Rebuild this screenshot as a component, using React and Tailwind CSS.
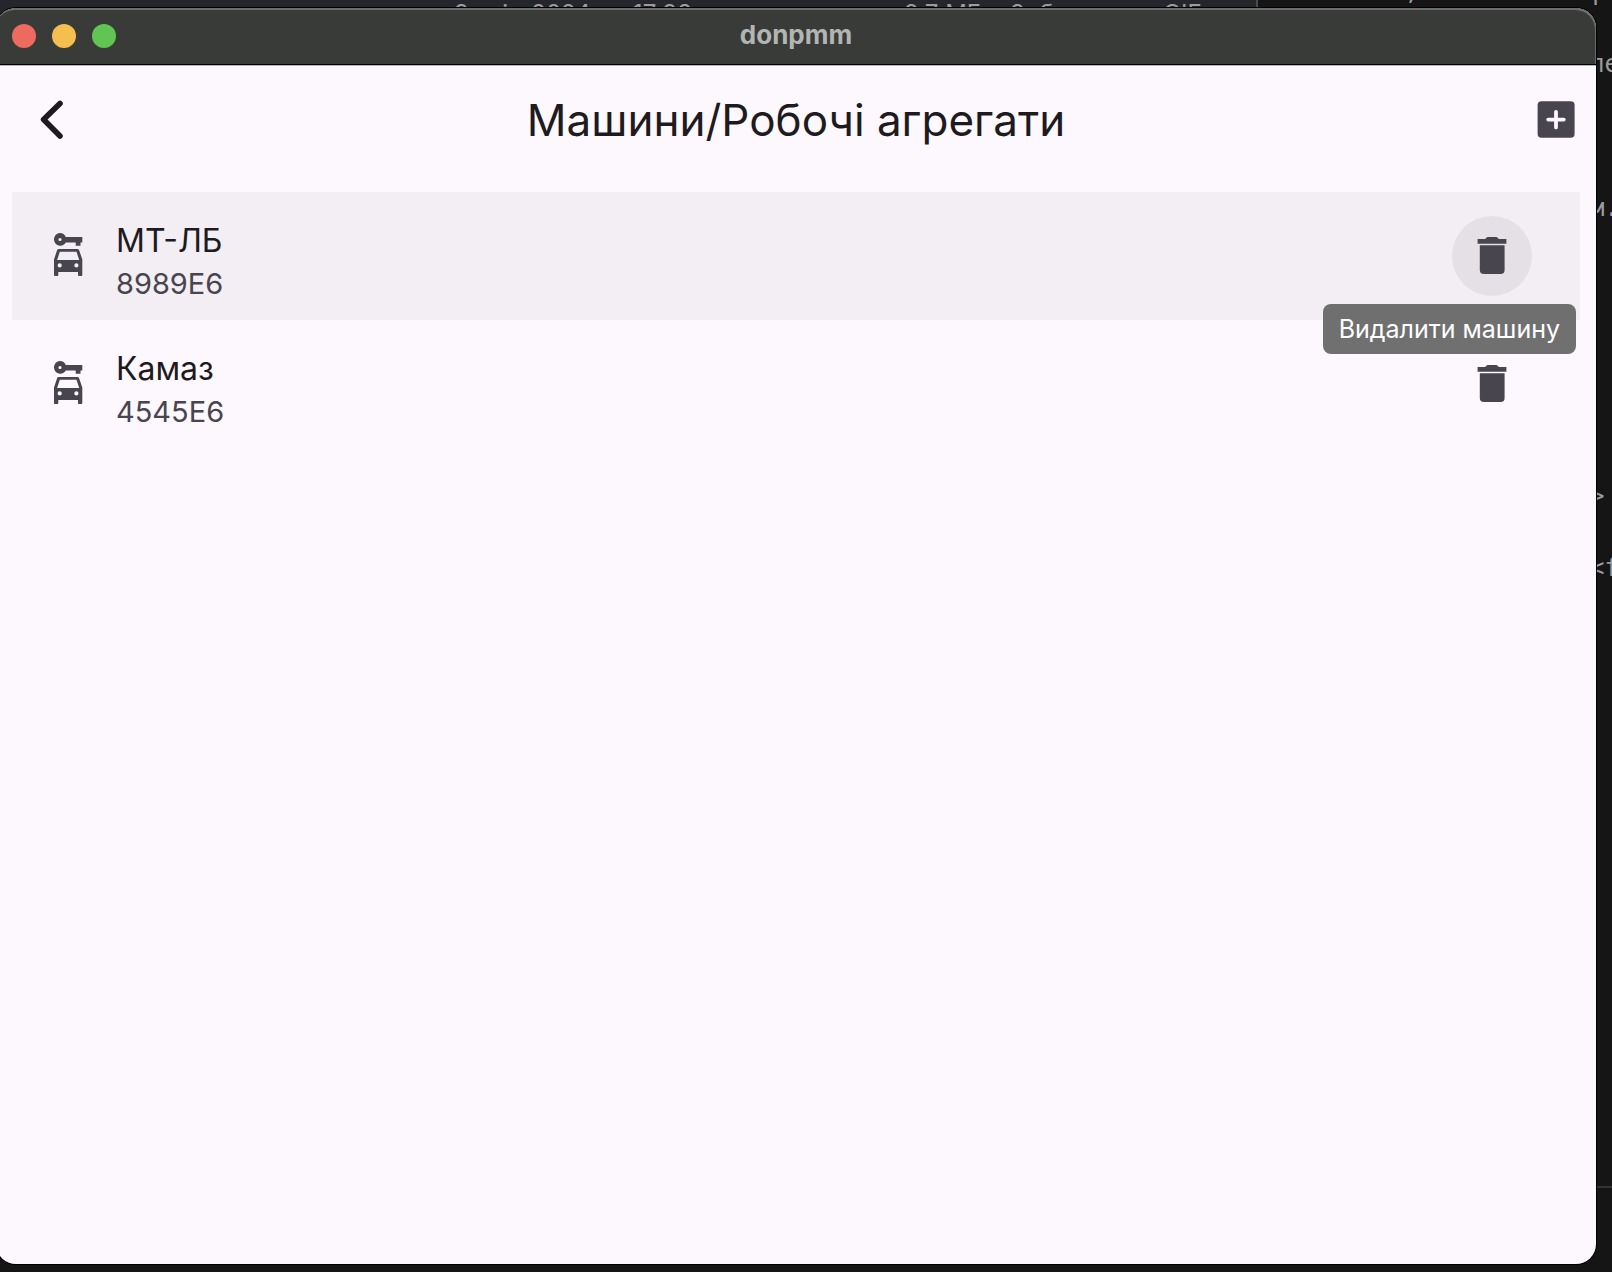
const vehicles = [
  { id: 1, name: "МТ-ЛБ", number: "8989Е6", hovered: true },
  { id: 2, name: "Камаз", number: "4545Е6", hovered: false },
];

function BackIcon() {
  return (
    <svg viewBox="0 0 48 48" className="size-12" fill="none" stroke="currentColor" strokeWidth="5.6" strokeLinecap="round" strokeLinejoin="round" aria-hidden="true">
      <path d="M32 7.4 15.6 23.6 32 40" />
    </svg>
  );
}

function AddIcon() {
  return (
    <svg viewBox="0 0 48 48" className="size-12" aria-hidden="true">
      <rect x="5.6" y="5.2" width="37" height="36.6" rx="4" fill="currentColor" />
      <path d="M24 15.8v15.6M16.2 23.6h15.6" stroke="#fdf8fe" strokeWidth="3.8" strokeLinecap="round" />
    </svg>
  );
}

function CarKeyIcon() {
  return (
    <svg viewBox="0 0 48 48" className="size-12" fill="currentColor" fillRule="evenodd" aria-hidden="true">
      <path d="M16 1.1a6.3 6.3 0 1 0 5.8 9.3h9.9v3.4h4.8v-3.4h1.8V4.9H21.8A6.3 6.3 0 0 0 16 1.1Zm0 4.8a1.6 1.6 0 1 1 0 3.2 1.6 1.6 0 0 1 0-3.2Z" />
      <path d="M14.9 17.1h18.4q1.4 0 1.9 1.3l3.1 9V43q0 .9-.9.9h-2.5q-.9 0-.9-.9v-3H14.3v3q0 .9-.9.9h-2.5q-.9 0-.9-.9V27.4l3-9q.5-1.3 1.9-1.3Zm.9 2.7-2.7 8.1h22.1l-2.7-8.1ZM15.7 31.3a2.1 2.1 0 1 0 0 4.2 2.1 2.1 0 0 0 0-4.2Zm16.7 0a2.1 2.1 0 1 0 0 4.2 2.1 2.1 0 0 0 0-4.2Z" />
    </svg>
  );
}

function TrashIcon() {
  return (
    <svg viewBox="0 0 48 48" className="size-12" fill="currentColor" aria-hidden="true">
      <path d="M9.6 7.1h7.6l1.4-1.5q.5-.5 1.2-.5h8.4q.7 0 1.2.5l1.4 1.5h7.6v4.6H9.6Z" />
      <path d="M11.8 13.3h24.8V38q0 4-4 4H15.8q-4 0-4-4Z" />
    </svg>
  );
}

function TitleBar() {
  return (
    <header className="grid h-14 grid-cols-[1fr_auto_1fr] items-center rounded-t-[20px] bg-[#393b39] px-4 shadow-[inset_-1px_2px_0_#6c6d6b]">
      <div className="flex gap-4">
        <button aria-label="Закрити" className="size-6 rounded-full bg-[#ed6a5e]" />
        <button aria-label="Згорнути" className="size-6 rounded-full bg-[#f5bf4f]" />
        <button aria-label="Розгорнути" className="size-6 rounded-full bg-[#61c554]" />
      </div>
      <span className="pb-0.5 text-[26px] leading-8 font-bold text-[#b3b5b3]">donpmm</span>
    </header>
  );
}

function VehicleRow({ vehicle }) {
  return (
    <li className={vehicle.hovered ? "relative z-10 flex h-32 items-center bg-[#f2eef3] pr-12 pl-8" : "flex h-32 items-center pr-12 pl-8"}>
      <span className="text-[#49454f]">
        <CarKeyIcon />
      </span>
      <div className="ml-6 flex-1 pt-2">
        <div className="text-[32px] leading-12 text-[#1d1b20]">{vehicle.name}</div>
        <div className="text-[29px] leading-[38px] text-[#49454f]">{vehicle.number}</div>
      </div>
      <div className="relative">
        <button
          aria-label="Видалити машину"
          className={
            vehicle.hovered
              ? "flex size-20 items-center justify-center rounded-full bg-[#e4e0e6] text-[#49454f]"
              : "flex size-20 items-center justify-center rounded-full text-[#49454f]"
          }
        >
          <TrashIcon />
        </button>
        {vehicle.hovered && (
          <div role="tooltip" className="absolute top-22 -right-11 rounded-lg bg-[#616161]/90 px-4 py-2 text-[25px] leading-[34px] whitespace-nowrap text-white">
            Видалити машину
          </div>
        )}
      </div>
    </li>
  );
}

function Backdrop() {
  return (
    <div aria-hidden="true" className="absolute inset-0 overflow-hidden text-[#9b9b9d]">
      <div className="absolute top-0 left-0 h-10 w-[1258px] border-r-2 border-[#4a4b50] bg-[#25262c] text-2xl leading-7 whitespace-nowrap">
        <span className="absolute top-0 left-[454px]">3 квіт. 2024 р., 17:38</span>
        <span className="absolute top-0 left-[904px]">9,7 МБ</span>
        <span className="absolute top-0 left-[1010px]">Зображення GIF</span>
      </div>
      <div className="font-['DejaVu_Sans_Mono'] text-2xl leading-8 whitespace-nowrap">
        <span className="absolute -top-6 left-[1260px]">screenshot, the mobile p</span>
        <span className="absolute top-12 left-[1590px]">ле</span>
        <span className="absolute top-48 left-[1590px]">м.</span>
        <span className="absolute top-120 left-[1590px]">&gt;</span>
        <span className="absolute top-138 left-[1590px]">&lt;f</span>
      </div>
      <div className="absolute right-0 bottom-[84px] h-0.5 w-4 bg-[#333333]" />
    </div>
  );
}

export default function App() {
  return (
    <div className="relative flex min-h-screen overflow-hidden bg-[#151515] pt-2 pr-4 pb-2 font-['Inter','Liberation_Sans',sans-serif]">
      <Backdrop />
      <main className="relative -ml-1 flex flex-1 flex-col overflow-hidden rounded-[20px] bg-[#fdf8fe] shadow-[0_0_0_1px_#000]">
        <TitleBar />
        <div className="grid h-28 grid-cols-[1fr_auto_1fr] items-center border-t border-black px-4 pb-0.5 shadow-[inset_0_1px_0_#b9b7ba]">
          <button aria-label="Назад" className="flex size-20 items-center justify-center text-[#1d1b20]">
            <BackIcon />
          </button>
          <h1 className="text-[44px] leading-14 text-[#1d1b20]">Машини/Робочі агрегати</h1>
          <button aria-label="Додати" className="justify-self-end text-[#49454f]">
            <AddIcon />
          </button>
        </div>
        <ul className="mx-4 mt-4">
          {vehicles.map((vehicle) => (
            <VehicleRow key={vehicle.id} vehicle={vehicle} />
          ))}
        </ul>
      </main>
    </div>
  );
}
